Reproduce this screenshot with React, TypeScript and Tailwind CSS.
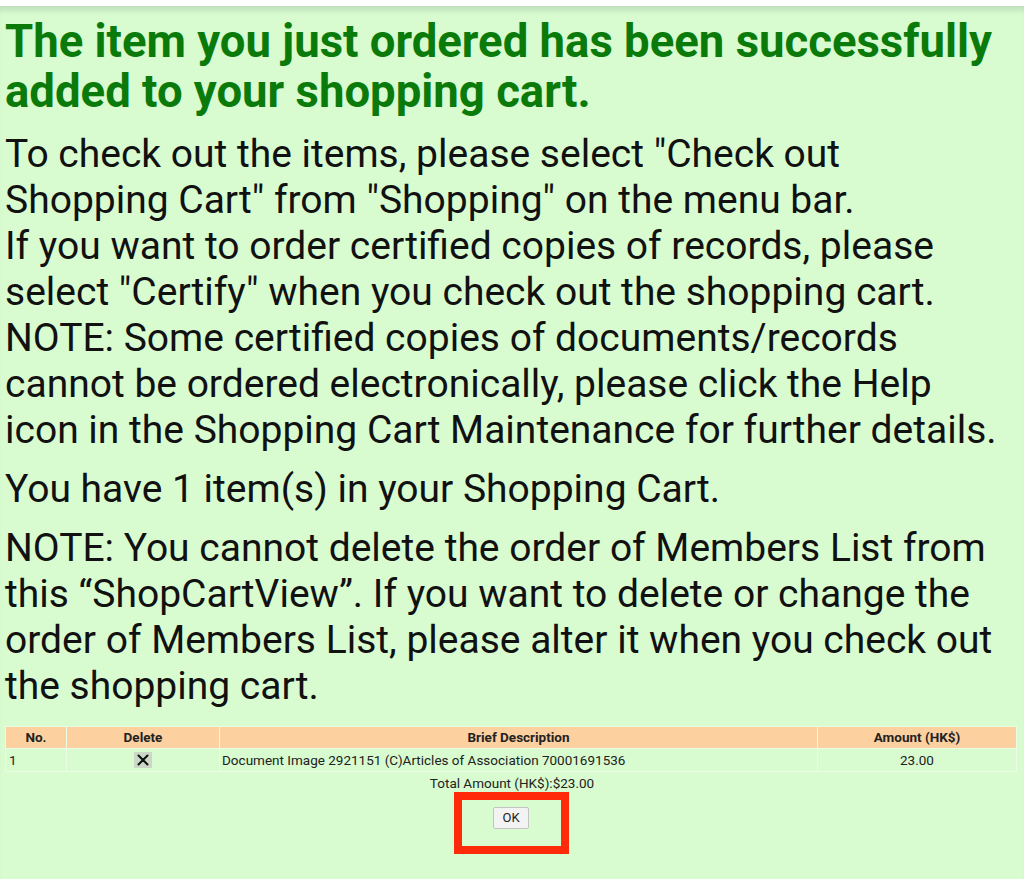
import React from "react";

function App() {
  return (
    <div
      className="min-h-[879px] w-full bg-[#d8fbd0] text-[#111] shadow-[inset_0_8px_6px_-4px_rgba(0,0,0,0.12)] border-t-[6px] border-white"
      style={{ fontFamily: "Roboto, 'Liberation Sans', sans-serif" }}
    >
      <div className="pl-[5px] pr-[5px] pt-[11px]">
        <div className="pr-[15px]">
          <h1 className="text-[45.5px] leading-[50px] font-bold text-[#0a7a0a]">
            The item you just ordered has been successfully added to your shopping cart.
          </h1>
          <p className="mt-[14px] text-[39px] leading-[46px]">
            To check out the items, please select "Check out Shopping Cart" from "Shopping" on the menu bar.
            <br />
            If you want to order certified copies of records, please select "Certify" when you check out the shopping cart.
            <br />
            NOTE: Some certified copies of documents/records cannot be ordered electronically, please click the Help icon in the Shopping Cart Maintenance for further details.
          </p>
          <p className="mt-[13px] text-[39px] leading-[46px]">You have 1 item(s) in your Shopping Cart.</p>
          <p className="mt-[13px] text-[39px] leading-[46px]">
            NOTE: You cannot delete the order of Members List from this “ShopCartView”. If you want to delete or change the order of Members List, please alter it when you check out the shopping cart.
          </p>
        </div>

        <table className="mt-[17px] w-[1012px] border-collapse text-[13.5px] leading-[15px] text-[#222]">
          <thead>
            <tr className="bg-[#fdd0a0] h-[22px]">
              <th className="w-[61px] border border-[#e9fde4] font-bold">No.</th>
              <th className="w-[153px] border border-[#e9fde4] font-bold">Delete</th>
              <th className="border border-[#e9fde4] font-bold">Brief Description</th>
              <th className="w-[199px] border border-[#e9fde4] font-bold">Amount (HK$)</th>
            </tr>
          </thead>
          <tbody>
            <tr className="h-[23px]">
              <td className="border border-[#e9fde4] pl-[3px]">1</td>
              <td className="border border-[#e9fde4] text-center">
                <span className="inline-flex h-[16px] w-[18px] items-center justify-center bg-[#cbd8c6] align-middle">
                  <svg width="12" height="12" viewBox="0 0 12 12">
                    <path d="M1.5 1.5 L10.5 10.5 M10.5 1.5 L1.5 10.5" stroke="#111" strokeWidth="2" strokeLinecap="round" />
                  </svg>
                </span>
              </td>
              <td className="border border-[#e9fde4] pl-[2px]">Document Image 2921151 (C)Articles of Association 70001691536</td>
              <td className="border border-[#e9fde4] text-center">23.00</td>
            </tr>
          </tbody>
        </table>

        <div className="mt-[3px] text-center text-[13.5px] leading-[16px] text-[#222]">Total Amount (HK$):$23.00</div>

        <div className="mt-[1px] flex justify-center">
          <div className="flex h-[62px] w-[115px] justify-center border-[8px] border-[#ff2a0a] pt-[7px] ml-[-2px]">
            <button className="h-[22px] w-[36px] rounded-[2px] border border-[#c4c4c4] bg-[#f3f3f3] text-[13px] text-[#222]">
              OK
            </button>
          </div>
        </div>
      </div>
    </div>
  );
}

export default App;
